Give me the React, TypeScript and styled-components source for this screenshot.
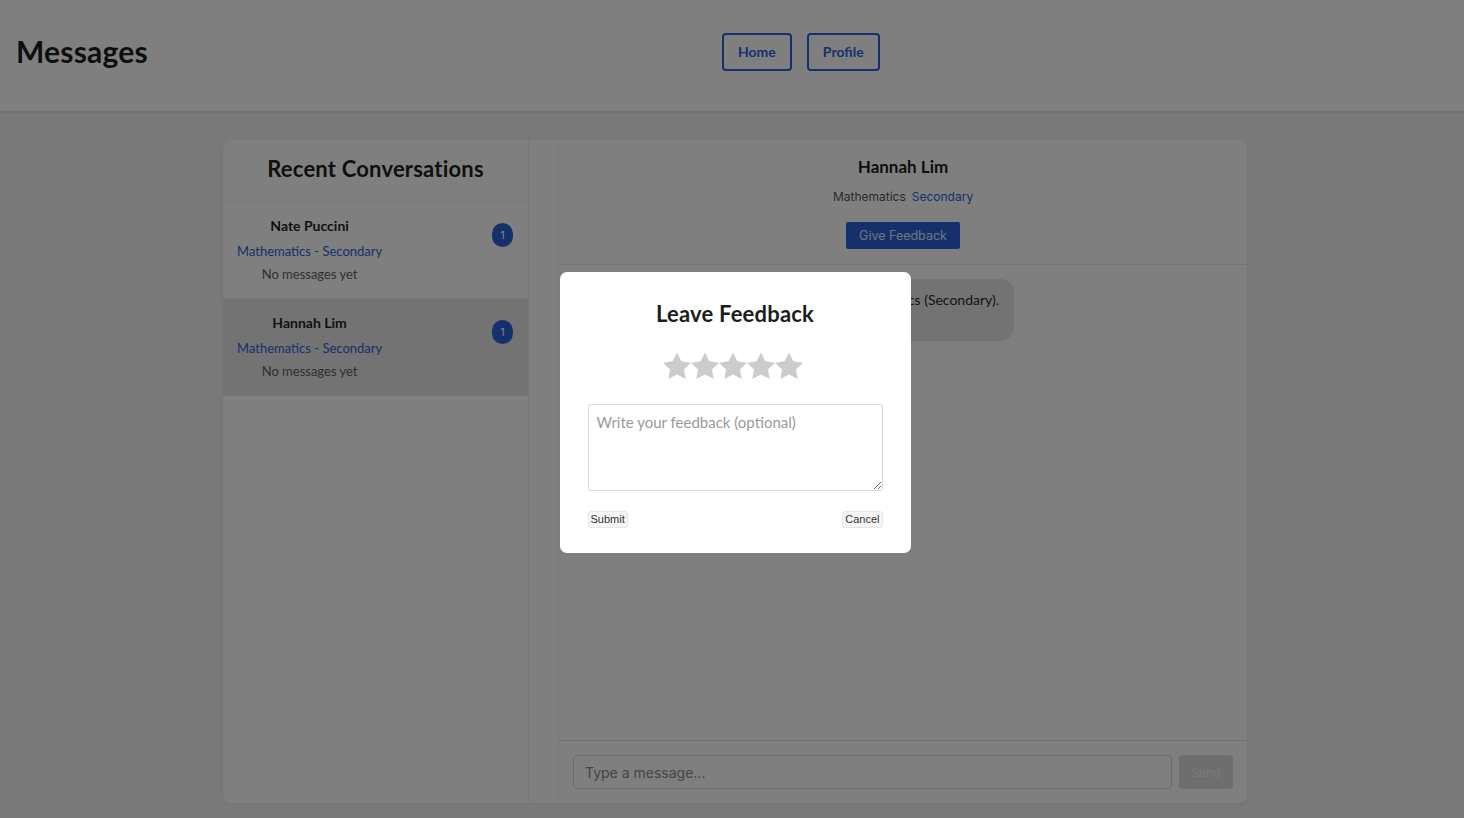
import React from 'react';
import styled, { createGlobalStyle } from 'styled-components';

const BLUE = '#2a62d8';

const GlobalStyle = createGlobalStyle`
  html, body {
    margin: 0;
    padding: 0;
    height: 100%;
    background: #f3f3f3;
    font-family: Lato, "Noto Sans", sans-serif;
    color: #222;
  }
  * { box-sizing: border-box; }
`;

interface Conversation {
  id: number;
  name: string;
  subject: string;
  preview: string;
  unread: number;
}

const conversations: Conversation[] = [
  { id: 1, name: 'Nate Puccini', subject: 'Mathematics - Secondary', preview: 'No messages yet', unread: 1 },
  { id: 2, name: 'Hannah Lim', subject: 'Mathematics - Secondary', preview: 'No messages yet', unread: 1 }
];

const Page = styled.div`
  min-height: 100vh;
  background: #f3f3f3;
`;

const Header = styled.header`
  display: grid;
  grid-template-columns: 706px auto 1fr;
  align-items: center;
  height: 113px;
  padding-left: 16px;
  background: #fff;
  border-bottom: 2px solid #e2e2e2;
`;

const Title = styled.h1`
  margin: 0 0 10px;
  font-size: 30px;
  font-weight: 700;
  letter-spacing: 0.2px;
  color: #1d1d1d;
`;

const Nav = styled.nav`
  display: flex;
  gap: 15px;
  margin-bottom: 8px;
`;

const NavButton = styled.button`
  height: 38px;
  padding: 0 14px;
  background: #fff;
  border: 2px solid ${BLUE};
  border-radius: 4px;
  color: ${BLUE};
  font-family: Lato, sans-serif;
  font-size: 14px;
  font-weight: 700;
`;

const Main = styled.main`
  padding-top: 27px;
`;

const Card = styled.div`
  display: flex;
  width: 1024px;
  height: 663px;
  margin: 0 auto;
  transform: translateX(3px);
  background: #fff;
  border-radius: 8px;
  box-shadow: 0 1px 4px rgba(0, 0, 0, 0.06);
  overflow: hidden;
`;

const Sidebar = styled.aside`
  width: 306px;
  flex-shrink: 0;
  border-right: 1px solid #ececec;
`;

const SidebarTitle = styled.h2`
  margin: 0;
  height: 62px;
  padding-top: 15px;
  font-size: 22px;
  font-weight: 700;
  letter-spacing: 0.2px;
  text-align: center;
  color: #1f1f1f;
  border-bottom: 1px solid #eeeeee;
`;

const ConvItem = styled.div<{ $active?: boolean }>`
  display: flex;
  justify-content: space-between;
  align-items: flex-start;
  padding: 14px 15px 15px 14px;
  border-bottom: 1px solid #eeeeee;
  background: ${({ $active }) => ($active ? '#e7e7e7' : '#fff')};
`;

const ConvText = styled.div`
  display: flex;
  flex-direction: column;
  align-items: center;
`;

const ConvName = styled.div`
  font-size: 14px;
  line-height: 20px;
  font-weight: 700;
  color: #1f1f1f;
`;

const ConvSubject = styled.div`
  margin-top: 6px;
  font-size: 13px;
  line-height: 18px;
  color: ${BLUE};
`;

const ConvPreview = styled.div`
  margin-top: 5px;
  font-size: 13px;
  line-height: 18px;
  color: #5e5e5e;
`;

const Badge = styled.span`
  display: flex;
  align-items: center;
  justify-content: center;
  min-width: 21px;
  height: 24px;
  margin-top: 7px;
  border-radius: 12px;
  background: ${BLUE};
  color: #fff;
  font-family: Inter, sans-serif;
  font-size: 11px;
`;

const Chat = styled.section`
  flex: 1;
  display: flex;
  flex-direction: column;
  margin-left: 29px;
  border-left: 1px solid #f2f2f2;
`;

const ChatHeader = styled.div`
  display: flex;
  flex-direction: column;
  align-items: center;
  height: 125px;
  padding-top: 16px;
  border-bottom: 1px solid #eaeaea;
`;

const ChatName = styled.div`
  font-size: 17px;
  line-height: 22px;
  font-weight: 700;
  color: #1d1d1d;
`;

const ChatMeta = styled.div`
  display: flex;
  gap: 6px;
  margin-top: 10px;
  font-family: Inter, sans-serif;
  font-size: 12px;
  line-height: 18px;
  color: #555;
`;

const MetaTag = styled.span<{ $accent?: boolean }>`
  color: ${({ $accent }) => ($accent ? BLUE : '#555')};
`;

const FeedbackButton = styled.button`
  height: 27px;
  margin-top: 16px;
  padding: 0 13px;
  border: none;
  border-radius: 2px;
  background: ${BLUE};
  color: #dfe7fa;
  font-family: Inter, sans-serif;
  font-size: 12.5px;
`;

const MessageList = styled.div`
  flex: 1;
  padding: 14px;
`;

const Bubble = styled.div`
  width: 441px;
  padding: 12px 15px 14px;
  border-radius: 14px;
  background: #e6e6e6;
  font-size: 14px;
  line-height: 18px;
  color: #2a2a2a;
  text-align: right;
`;

const BubbleTime = styled.div`
  margin-top: 4px;
  font-size: 11px;
  line-height: 14px;
  color: #777;
  text-align: left;
`;

const Composer = styled.div`
  display: flex;
  gap: 7px;
  padding: 14px;
  border-top: 1px solid #e6e6e6;
`;

const MessageInput = styled.input`
  flex: 1;
  height: 34px;
  padding: 0 11px;
  border: 1px solid #d6d6d6;
  border-radius: 4px;
  font-family: Inter, sans-serif;
  font-size: 14px;

  &::placeholder {
    color: #8a8a8a;
  }
`;

const SendButton = styled.button`
  width: 54px;
  height: 34px;
  border: none;
  border-radius: 4px;
  background: #dcdcdc;
  color: #f4f4f4;
  font-family: Inter, sans-serif;
  font-size: 12px;
`;

const Overlay = styled.div`
  position: fixed;
  inset: 0;
  display: flex;
  align-items: center;
  justify-content: center;
  padding: 7px 0 0 6px;
  background: rgba(0, 0, 0, 0.5);
`;

const Modal = styled.div`
  display: flex;
  flex-direction: column;
  width: 351px;
  padding: 28px 28px 25px;
  border-radius: 7px;
  background: #fff;
`;

const ModalTitle = styled.h3`
  margin: 0;
  font-size: 22px;
  line-height: 28px;
  font-weight: 700;
  letter-spacing: 0.2px;
  text-align: center;
  color: #1d1d1d;
`;

const Stars = styled.div`
  display: flex;
  justify-content: center;
  margin-top: 24px;
  padding-right: 4px;
`;

const Star = styled.svg`
  width: 28px;
  height: 28px;
  fill: #cccccc;
`;

const FeedbackInput = styled.textarea`
  height: 87px;
  margin-top: 24px;
  padding: 8px 8px;
  border: 1px solid #d8d8d8;
  border-radius: 3px;
  font-family: Lato, sans-serif;
  font-size: 15px;
  resize: vertical;

  &::placeholder {
    color: #9a9a9a;
  }
`;

const Actions = styled.div`
  display: flex;
  justify-content: space-between;
  margin-top: 20px;
`;

const SmallButton = styled.button`
  height: 17px;
  padding: 0 2px;
  border: 1px solid #e6e6e6;
  border-radius: 3px;
  background: #f5f5f5;
  color: #333;
  font-family: "Liberation Sans", Arial, sans-serif;
  font-size: 11px;
  line-height: 15px;
`;

const StarIcon: React.FC = () => (
  <Star viewBox="2 2 20 19.3">
    <path d="M12 2l3.09 6.26L22 9.27l-5 4.87 1.18 6.88L12 17.77l-6.18 3.25L7 14.14 2 9.27l6.91-1.01L12 2z" />
  </Star>
);

const App: React.FC = () => (
  <Page>
    <GlobalStyle />
    <Header>
      <Title>Messages</Title>
      <Nav>
        <NavButton>Home</NavButton>
        <NavButton>Profile</NavButton>
      </Nav>
    </Header>
    <Main>
      <Card>
        <Sidebar>
          <SidebarTitle>Recent Conversations</SidebarTitle>
          {conversations.map((c) => (
            <ConvItem key={c.id} $active={c.name === 'Hannah Lim'}>
              <ConvText>
                <ConvName>{c.name}</ConvName>
                <ConvSubject>{c.subject}</ConvSubject>
                <ConvPreview>{c.preview}</ConvPreview>
              </ConvText>
              <Badge>{c.unread}</Badge>
            </ConvItem>
          ))}
        </Sidebar>
        <Chat>
          <ChatHeader>
            <ChatName>Hannah Lim</ChatName>
            <ChatMeta>
              <MetaTag>Mathematics</MetaTag>
              <MetaTag $accent>Secondary</MetaTag>
            </ChatMeta>
            <FeedbackButton>Give Feedback</FeedbackButton>
          </ChatHeader>
          <MessageList>
            <Bubble>
              Hi Hannah! I would like tutoring in Mathematics (Secondary).
              <BubbleTime>10:24 AM</BubbleTime>
            </Bubble>
          </MessageList>
          <Composer>
            <MessageInput placeholder="Type a message..." />
            <SendButton disabled>Send</SendButton>
          </Composer>
        </Chat>
      </Card>
    </Main>
    <Overlay>
      <Modal>
        <ModalTitle>Leave Feedback</ModalTitle>
        <Stars>
          {[1, 2, 3, 4, 5].map((n) => (
            <StarIcon key={n} />
          ))}
        </Stars>
        <FeedbackInput placeholder="Write your feedback (optional)" />
        <Actions>
          <SmallButton>Submit</SmallButton>
          <SmallButton>Cancel</SmallButton>
        </Actions>
      </Modal>
    </Overlay>
  </Page>
);

export default App;
